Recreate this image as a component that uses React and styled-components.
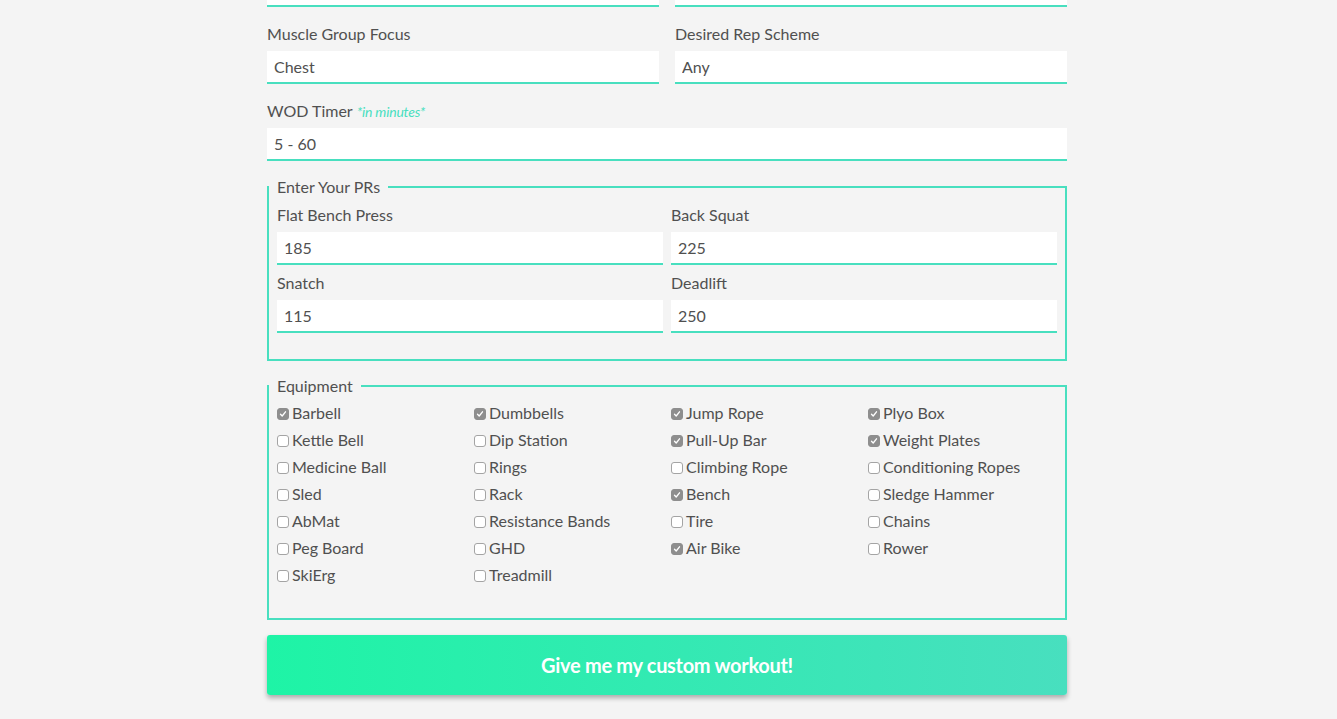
import React from "react";
import styled, { createGlobalStyle } from "styled-components";

const accent = "#48dfbf";

const GlobalStyle = createGlobalStyle`
  html, body {
    margin: 0;
    padding: 0;
    background: #f4f4f4;
    font-family: Lato, "Open Sans", sans-serif;
    color: #555;
    overflow: hidden;
  }
`;

const Page = styled.div`
  width: 800px;
  margin: -26px 0 0 calc(50% - 401.5px);
  padding-bottom: 40px;
`;

const Row = styled.div`
  display: grid;
  grid-template-columns: ${(p) => (p.cols === 1 ? "1fr" : "1fr 1fr")};
  column-gap: 16px;
  margin-top: ${(p) => p.top ?? 17}px;
`;

const Field = styled.div`
  display: flex;
  flex-direction: column;
`;

const Label = styled.label`
  display: block;
  font-size: 16px;
  line-height: 20px;
  height: 20px;
  margin-bottom: 7px;
  color: #505050;
  white-space: nowrap;
`;

const Hint = styled.em`
  color: ${accent};
  font-size: 14px;
  line-height: 1;
  margin-left: 4px;
  letter-spacing: -0.2px;
`;

const Input = styled.input`
  box-sizing: border-box;
  height: 33px;
  border: none;
  border-bottom: 2px solid ${accent};
  background: #fff;
  padding: 0 7px;
  font-family: inherit;
  font-size: 16px;
  color: #505050;
  outline: none;
`;

const Fieldset = styled.fieldset`
  margin: ${(p) => p.top}px 0 0;
  padding: 0 8px 26px;
  border: 2px solid ${accent};
  min-width: 0;
`;

const Legend = styled.legend`
  margin-left: -8px;
  padding: 0 8px;
  font-size: 16px;
  line-height: 20px;
  color: #505050;
`;

const PrGrid = styled.div`
  display: grid;
  grid-template-columns: 1fr 1fr;
  column-gap: 8px;
  row-gap: 8px;
  padding-top: 8px;
`;

const CheckGrid = styled.div`
  display: grid;
  grid-template-columns: repeat(4, 1fr);
  column-gap: 8px;
  padding-top: 7px;
`;

const CheckItem = styled.label`
  display: flex;
  align-items: center;
  font-size: 16px;
  line-height: 20px;
  margin-bottom: 7px;
  color: #505050;
  white-space: nowrap;
`;

const Box = styled.span`
  box-sizing: border-box;
  width: 12px;
  height: 12px;
  margin: 1px 3px 0 0;
  border-radius: 3px;
  border: 1px solid ${(p) => (p.checked ? "#8e8e8e" : "#a4a4a4")};
  background: ${(p) => (p.checked ? "#8e8e8e" : "#fff")};
  display: flex;
  align-items: center;
  justify-content: center;
  flex-shrink: 0;
`;

const SubmitButton = styled.button`
  display: block;
  width: 100%;
  height: 60px;
  margin-top: 15px;
  border: none;
  border-radius: 3px;
  background: linear-gradient(90deg, #1ef4a6 0%, #48dfbf 100%);
  box-shadow: 0 3px 5px rgba(0, 0, 0, 0.3);
  color: #fff;
  font-family: inherit;
  font-weight: 700;
  font-size: 20px;
  letter-spacing: -0.3px;
  cursor: pointer;
`;

const equipment = [
  ["Barbell", true], ["Dumbbells", true], ["Jump Rope", true], ["Plyo Box", true],
  ["Kettle Bell", false], ["Dip Station", false], ["Pull-Up Bar", true], ["Weight Plates", true],
  ["Medicine Ball", false], ["Rings", false], ["Climbing Rope", false], ["Conditioning Ropes", false],
  ["Sled", false], ["Rack", false], ["Bench", true], ["Sledge Hammer", false],
  ["AbMat", false], ["Resistance Bands", false], ["Tire", false], ["Chains", false],
  ["Peg Board", false], ["GHD", false], ["Air Bike", true], ["Rower", false],
  ["SkiErg", false], ["Treadmill", false],
];

const Check = ({ checked }) => (
  <Box checked={checked}>
    {checked && (
      <svg width="8" height="8" viewBox="0 0 8 8">
        <path d="M1.5 4.2 L3.2 6 L6.5 1.8" fill="none" stroke="#fff" strokeWidth="1.3" strokeLinecap="round" strokeLinejoin="round" />
      </svg>
    )}
  </Box>
);

export default function App() {
  return (
    <>
      <GlobalStyle />
      <Page>
        <Row top={0}>
          <Input readOnly defaultValue="" />
          <Input readOnly defaultValue="" />
        </Row>

        <Row>
          <Field>
            <Label>Muscle Group Focus</Label>
            <Input readOnly defaultValue="Chest" />
          </Field>
          <Field>
            <Label>Desired Rep Scheme</Label>
            <Input readOnly defaultValue="Any" />
          </Field>
        </Row>

        <Row cols={1}>
          <Field>
            <Label>
              WOD Timer<Hint>*in minutes*</Hint>
            </Label>
            <Input readOnly defaultValue="5 - 60" />
          </Field>
        </Row>

        <Fieldset top={16}>
          <Legend>Enter Your PRs</Legend>
          <PrGrid>
            <Field>
              <Label>Flat Bench Press</Label>
              <Input readOnly defaultValue="185" />
            </Field>
            <Field>
              <Label>Back Squat</Label>
              <Input readOnly defaultValue="225" />
            </Field>
            <Field>
              <Label>Snatch</Label>
              <Input readOnly defaultValue="115" />
            </Field>
            <Field>
              <Label>Deadlift</Label>
              <Input readOnly defaultValue="250" />
            </Field>
          </PrGrid>
        </Fieldset>

        <Fieldset top={15}>
          <Legend>Equipment</Legend>
          <CheckGrid>
            {equipment.map(([name, checked]) => (
              <CheckItem key={name}>
                <Check checked={checked} />
                {name}
              </CheckItem>
            ))}
          </CheckGrid>
        </Fieldset>

        <SubmitButton>Give me my custom workout!</SubmitButton>
      </Page>
    </>
  );
}
